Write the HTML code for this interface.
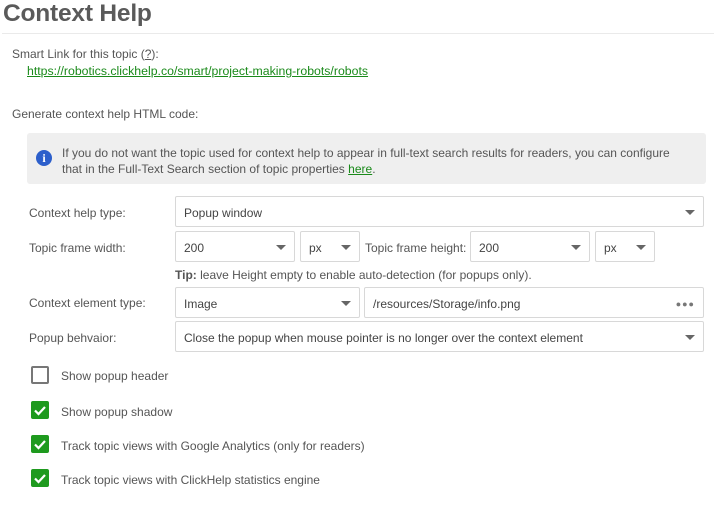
<!DOCTYPE html>
<html><head><style>
body{margin:0;width:714px;height:507px;background:#fff;font-family:"Liberation Sans",sans-serif;font-size:12px;color:#555;position:relative;overflow:hidden}
.a{position:absolute;white-space:nowrap}
h1{position:absolute;left:3px;top:0;margin:0;font-size:24.5px;font-weight:bold;color:#5a5a5a;letter-spacing:-0.2px}
.hr{position:absolute;left:2px;right:0;top:33px;height:1px;background:#eaeaea}
a{color:#1a8a1a;text-decoration:underline}
.box{position:absolute;border:1px solid #d8d8d8;border-radius:2px;background:#fff;box-sizing:border-box;height:31px;line-height:32px;padding-left:8px;color:#444}
.arr{position:absolute;right:8px;top:13px;width:0;height:0;border-left:5px solid transparent;border-right:5px solid transparent;border-top:5px solid #666}
.cb{position:absolute;left:31px;width:18px;height:18px;box-sizing:border-box;border-radius:2px}
.on{background:#1e9a1e}
.off{border:2px solid #777}
</style></head><body>
<h1>Context Help</h1>
<div class="hr"></div>
<div class="a" style="left:12px;top:47px">Smart Link for this topic (<span style="text-decoration:underline">?</span>):</div>
<div class="a" style="left:27px;top:64px;font-size:12.3px"><a>https://robotics.clickhelp.co/smart/project-making-robots/robots</a></div>
<div class="a" style="left:12px;top:107px">Generate context help HTML code:</div>
<div class="a" style="left:27px;top:133px;width:679px;height:51px;background:#efefef;border-radius:3px"></div>
<div class="a" style="left:36px;top:150px;width:16px;height:16px;border-radius:50%;background:#2c5fcb;color:#fff;font-weight:bold;font-size:12px;text-align:center;line-height:16px;font-family:'Liberation Serif',serif">i</div>
<div class="a" style="left:62px;top:145px;line-height:16px">If you do not want the topic used for context help to appear in full-text search results for readers, you can configure<br>that in the Full-Text Search section of topic properties <a>here</a>.</div>

<div class="a" style="left:29px;top:206px">Context help type:</div>
<div class="box" style="left:175px;top:196px;width:529px">Popup window<div class="arr"></div></div>

<div class="a" style="left:29px;top:241px">Topic frame width:</div>
<div class="box" style="left:175px;top:231px;width:120px">200<div class="arr"></div></div>
<div class="box" style="left:300px;top:231px;width:60px">px<div class="arr"></div></div>
<div class="a" style="left:365px;top:241px">Topic frame height:</div>
<div class="box" style="left:470px;top:231px;width:120px">200<div class="arr"></div></div>
<div class="box" style="left:595px;top:231px;width:60px">px<div class="arr"></div></div>

<div class="a" style="left:175px;top:268px"><b>Tip:</b> leave Height empty to enable auto-detection (for popups only).</div>

<div class="a" style="left:29px;top:296px">Context element type:</div>
<div class="box" style="left:175px;top:287px;width:185px">Image<div class="arr"></div></div>
<div class="box" style="left:364px;top:287px;width:340px">/resources/Storage/info.png<span style="position:absolute;right:8px;top:0;color:#777;font-size:9px;letter-spacing:1px">●●●</span></div>

<div class="a" style="left:29px;top:331px">Popup behvaior:</div>
<div class="box" style="left:175px;top:321px;width:529px">Close the popup when mouse pointer is no longer over the context element<div class="arr"></div></div>

<div class="cb off" style="top:366px"></div>
<div class="a" style="left:61px;top:369px">Show popup header</div>
<div class="cb on" style="top:401px"><svg width="18" height="18"><path d="M4 9.5l3.5 3.5L14 6" stroke="#fff" stroke-width="2.2" fill="none"/></svg></div>
<div class="a" style="left:61px;top:405px">Show popup shadow</div>
<div class="cb on" style="top:435px"><svg width="18" height="18"><path d="M4 9.5l3.5 3.5L14 6" stroke="#fff" stroke-width="2.2" fill="none"/></svg></div>
<div class="a" style="left:61px;top:439px">Track topic views with Google Analytics (only for readers)</div>
<div class="cb on" style="top:469px"><svg width="18" height="18"><path d="M4 9.5l3.5 3.5L14 6" stroke="#fff" stroke-width="2.2" fill="none"/></svg></div>
<div class="a" style="left:61px;top:473px">Track topic views with ClickHelp statistics engine</div>
</body></html>
